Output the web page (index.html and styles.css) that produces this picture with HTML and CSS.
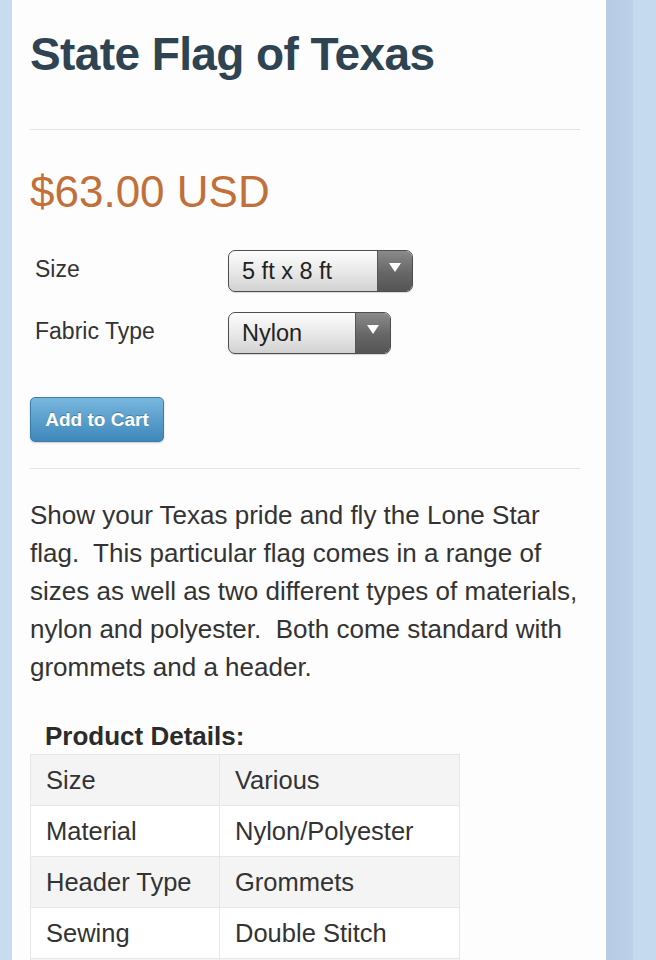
FILE: index.html
```html
<!DOCTYPE html>
<html lang="en">
<head>
    <meta charset="UTF-8">
    <meta name="viewport" content="width=device-width, initial-scale=1.0">
    <link rel="stylesheet" href="styles.css">
    <title>State Flag of Texas</title>
</head>
<body>
    <div class="page">
        <h1 class="title">State Flag of Texas</h1>
        <div class="rule"></div>

        <p class="price">$63.00 USD</p>

        <form class="options">
            <div class="option-row">
                <label class="option-label">Size</label>
                <div class="picker picker-size">
                    <span class="picker-value">5 ft x 8 ft</span>
                    <span class="picker-arrow">
                        <svg width="12" height="10" viewBox="0 0 12 10"><polygon points="0,0 12,0 6,9" fill="#fff"/></svg>
                    </span>
                </div>
            </div>
            <div class="option-row">
                <label class="option-label">Fabric Type</label>
                <div class="picker picker-fabric">
                    <span class="picker-value">Nylon</span>
                    <span class="picker-arrow">
                        <svg width="12" height="10" viewBox="0 0 12 10"><polygon points="0,0 12,0 6,9" fill="#fff"/></svg>
                    </span>
                </div>
            </div>
            <button type="button" class="add-cart">Add to Cart</button>
        </form>

        <div class="rule rule-low"></div>

        <p class="description">Show your Texas pride and fly the Lone Star flag.&nbsp; This particular flag comes in a range of sizes as well as two different types of materials, nylon and polyester.&nbsp; Both come standard with grommets and a header.</p>

        <table class="details">
            <caption>Product Details:</caption>
            <tr><td class="col-name">Size</td><td>Various</td></tr>
            <tr><td class="col-name">Material</td><td>Nylon/Polyester</td></tr>
            <tr><td class="col-name">Header Type</td><td>Grommets</td></tr>
            <tr><td class="col-name">Sewing</td><td>Double Stitch</td></tr>
            <tr class="row-tail"><td class="col-name"></td><td></td></tr>
        </table>
    </div>
    <div class="band"></div>
    <div class="backdrop"></div>
</body>
</html>
```

FILE: styles.css
```css
body{
    margin: 0;
    display: flex;
    align-items: stretch;
    min-height: 960px;
    font-family: "Liberation Sans", Arial, sans-serif;
    color: #333;
    background: #c8dcf0;
}
.page{
    flex: none;
    margin-left: 12px;
    width: 550px;
    min-height: 960px;
    padding: 26px 26px 0 18px;
    background: #fdfdfd;
    box-shadow: 1px 0 2px rgba(90,110,140,0.15);
}
.band{
    flex: none;
    width: 27px;
    background: linear-gradient(to right, #b6cbe4, #bcd0e8);
}
.backdrop{
    flex: 1;
    background: #c6daef;
}
.title{
    margin: 0;
    font-size: 46px;
    line-height: 56px;
    letter-spacing: -0.6px;
    font-weight: bold;
    color: #2e4452;
}
.rule{
    margin-top: 47px;
    border-top: 1px solid #e4e4e4;
}
.rule-low{
    margin-top: 26px;
}
.price{
    margin: 36px 0 0 0;
    font-size: 44px;
    line-height: 52px;
    color: #c2703a;
}
.options{
    margin-top: 32px;
}
.option-row{
    display: flex;
    align-items: center;
    height: 42px;
    margin-bottom: 20px;
}
.option-label{
    width: 193px;
    padding-left: 5px;
    padding-bottom: 3px;
    font-size: 23px;
    color: #333;
}
.picker{
    display: flex;
    height: 40px;
    border: 1px solid #4e4e4e;
    border-radius: 7px;
    overflow: hidden;
    background: linear-gradient(#fdfdfd, #e9e9e9 50%, #d2d2d2);
    box-shadow: 0 1px 1px rgba(0,0,0,0.15);
}
.picker-size{
    width: 183px;
}
.picker-fabric{
    width: 161px;
}
.picker-value{
    flex: 1;
    padding-left: 13px;
    font-size: 23.5px;
    line-height: 40px;
    color: #222;
}
.picker-arrow{
    width: 35px;
    display: flex;
    justify-content: center;
    padding-top: 12px;
    box-sizing: border-box;
    border-left: 1px solid #555;
    background: linear-gradient(#8a8a8a, #666 55%, #555);
}
.add-cart{
    display: block;
    margin-top: 43px;
    width: 134px;
    height: 45px;
    padding: 0;
    border: 1px solid #3a7cab;
    border-radius: 5px;
    background: linear-gradient(#79b7de, #5a9fcc 50%, #3f88bb);
    box-shadow: 0 1px 2px rgba(0,0,0,0.2);
    font-family: "Liberation Sans", Arial, sans-serif;
    font-size: 19px;
    font-weight: bold;
    color: #fff;
    text-shadow: 0 -1px 0 rgba(0,0,0,0.25);
}
.description{
    margin: 27px 0 0 0;
    font-size: 26px;
    line-height: 38px;
    color: #333;
}
.details{
    margin-top: 35px;
    width: 430px;
    border-collapse: collapse;
    font-size: 25.5px;
    line-height: 30px;
}
.details caption{
    text-align: left;
    padding: 0 0 3px 15px;
    font-size: 26px;
    font-weight: bold;
    color: #2b2b2b;
}
.details td{
    padding: 10px 15px;
    border: 1px solid #e7e7e7;
    color: #333;
}
.details .row-tail td{
    height: 30px;
}
.details .col-name{
    width: 158px;
}
.details tr:nth-child(odd) td{
    background: #f4f4f4;
}
.details tr:nth-child(even) td{
    background: #fff;
}
```
